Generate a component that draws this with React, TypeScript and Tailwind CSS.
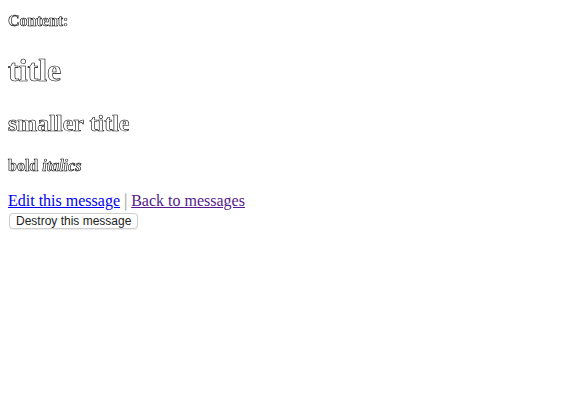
const outline = "text-white [-webkit-text-stroke:0.6px_#000] antialiased will-change-transform";

export default function App() {
  return (
    <div className="min-h-screen bg-white px-2 font-['Liberation_Serif',serif] text-black">
      <div className={`pt-[13px] text-base leading-4 font-bold ${outline}`}>Content:</div>
      <div>
        <h1 className={`mt-[25px] text-[32px] leading-8 font-bold ${outline}`}>title</h1>
        <h2 className={`mt-[25px] text-2xl leading-6 font-bold ${outline}`}>smaller title</h2>
        <div className={`mt-[23px] text-base leading-4 ${outline}`}>
          <strong>bold</strong> <em className="font-bold">italics</em>
        </div>
      </div>
      <div className="mt-[19px] text-base leading-4">
        <a href="#" className="text-[#0000ee] underline">
          Edit this message
        </a>{" "}
        <span className="text-white [-webkit-text-stroke:0.3px_#555] font-light">|</span>{" "}
        <a href="#" className="text-[#551a8b] underline">
          Back to messages
        </a>
        <div className="mt-[3px]">
          <button className="ml-px h-4 rounded-[4px] border border-[#cfcfcf] bg-white px-[6px] font-['Liberation_Sans',sans-serif] text-[12px] leading-[14px] text-[#222] shadow-[0_0.5px_1px_rgba(0,0,0,0.08)]">
            Destroy this message
          </button>
        </div>
      </div>
    </div>
  );
}
